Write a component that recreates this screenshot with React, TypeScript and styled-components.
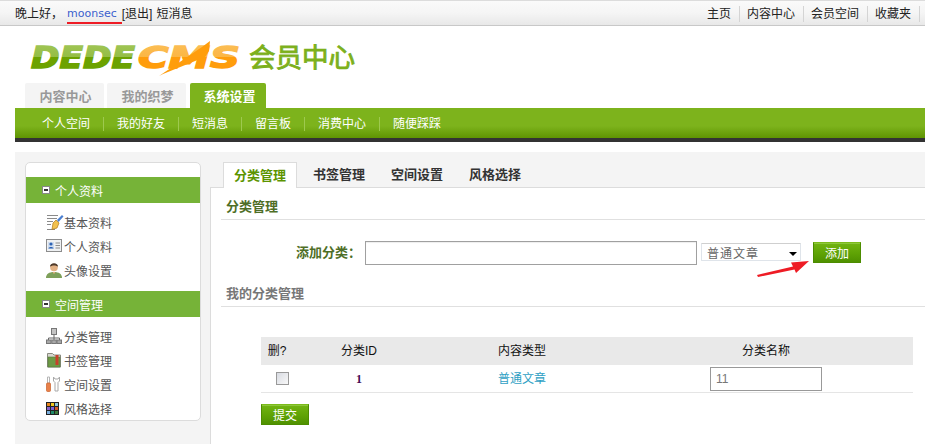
import styled, { createGlobalStyle } from 'styled-components';

const GlobalStyle = createGlobalStyle`
    html, body {
        margin: 0;
        padding: 0;
        background: #fff;
        font-family: "Liberation Sans", "Noto Sans CJK SC", sans-serif;
        font-size: 12px;
        color: #333;
    }
    * { box-sizing: border-box; }
`;

const PenIcon = () => (
    <svg width="18" height="16" viewBox="0 0 18 16">
        <path d="M1 1.500h11M1 4.500h10M1 7.500h6M1 10.500h4M1 15.500h8" stroke="#8a8a8a" fill="none" />
        <path d="M7 9l3-3 3 3-2 5-5 1.500z" fill="#f2c14e" stroke="#b07a1a" strokeWidth=".7" />
        <path d="M11 6l5-5 1.500 1.500-5 5.500z" fill="#4a7fd0" />
    </svg>
);

const CardIcon = () => (
    <svg width="16" height="14" viewBox="0 0 16 14">
        <rect x=".5" y=".5" width="15" height="12" fill="#eef0f2" stroke="#8c8c8c" />
        <rect x="2" y="3" width="6" height="7" fill="#cfdcee" />
        <circle cx="5" cy="5" r="1.600" fill="#2c62b4" />
        <path d="M2.500 9.500c0-2 5-2 5 0z" fill="#2c62b4" />
        <path d="M9.500 4h4.500M9.500 6.500h4.500M9.500 9h4.500" stroke="#8c8c8c" />
    </svg>
);

const UserIcon = () => (
    <svg width="16" height="16" viewBox="0 0 16 16">
        <path d="M0 16c0-4 3-6 8-6s8 2 8 6z" fill="#7ea05a" />
        <circle cx="8" cy="5.500" r="3.800" fill="#e2b184" />
        <path d="M4 5c-.5-5 8.500-5 8 0-1-2-7-2-8 0z" fill="#4e3a2a" />
        <path d="M6.500 10l1.500 2 1.500-2z" fill="#e2b184" />
    </svg>
);

const TreeIcon = () => (
    <svg width="16" height="16" viewBox="0 0 16 16">
        <rect x="5.500" y=".5" width="5" height="6" fill="#c4c4c4" stroke="#777" />
        <path d="M8 7v3M2.500 12v-2h11v2M8 10v2" stroke="#666" fill="none" />
        <rect x=".5" y="12" width="4.500" height="3.500" fill="#a8a8a8" stroke="#777" />
        <rect x="5.800" y="12" width="4.500" height="3.500" fill="#a8a8a8" stroke="#777" />
        <rect x="11" y="12" width="4.500" height="3.500" fill="#a8a8a8" stroke="#777" />
    </svg>
);

const FolderIcon = () => (
    <svg width="16" height="16" viewBox="0 0 16 16">
        <path d="M1.500 3V1.500h5L8 3h6.500v12h-13z" fill="#d8d8d0" stroke="#8a8a80" />
        <rect x="2" y="5" width="12" height="10" fill="#6d9a45" stroke="#55783a" strokeWidth=".6" />
        <rect x="9.500" y="3" width="3" height="10" fill="#c8402c" />
    </svg>
);

const ToolsIcon = () => (
    <svg width="16" height="16" viewBox="0 0 16 16">
        <path d="M1.500 1h2v6h-2z" fill="#fff" stroke="#b5b5b5" />
        <rect x="0.500" y="7" width="4" height="8.500" rx="1" fill="#e8804a" stroke="#c9612c" strokeWidth=".7" />
        <path d="M7.500 1v4L9 6.500v8.500h3V6.500L13.500 5V1L12 3H9z" fill="#fff" stroke="#a9a9a9" />
    </svg>
);

const GridIcon = () => {
    const colors = ['#e8861c', '#f2c81e', '#8cc6d8', '#8a62c8', '#7a62d8', '#d65a2a', '#7aaede', '#1e8a6a', '#3c7a3a'];
    return (
        <svg width="13" height="13" viewBox="0 0 13 13">
            <rect width="13" height="13" fill="#222" />
            {colors.map((color, index) => (
                <rect key={index} x={(index % 3) * 4 + 1} y={Math.floor(index / 3) * 4 + 1} width="3" height="3" fill={color} />
            ))}
        </svg>
    );
};

const Logo = () => (
    <svg width="335" height="48" viewBox="0 -6 335 48">
        <defs>
            <linearGradient id="dedeFill" x1="0" y1="0" x2="0" y2="1">
                <stop offset="0" stopColor="#a5c85a" />
                <stop offset="0.5" stopColor="#94bd46" />
                <stop offset="0.51" stopColor="#6ca200" />
                <stop offset="1" stopColor="#6ca200" />
            </linearGradient>
            <linearGradient id="cmsFill" x1="0" y1="0" x2="0" y2="1">
                <stop offset="0" stopColor="#fcc15c" />
                <stop offset="0.5" stopColor="#fbb644" />
                <stop offset="0.51" stopColor="#ff9d0c" />
                <stop offset="1" stopColor="#ff9d0c" />
            </linearGradient>
        </defs>
        <text x="1" y="29" fontFamily="'DejaVu Sans'" fontWeight="700" fontStyle="italic" fontSize="31" textLength="104" lengthAdjust="spacingAndGlyphs" fill="url(#dedeFill)" stroke="url(#dedeFill)" strokeWidth="1.500">DEDE</text>
        <text x="108" y="29" fontFamily="'DejaVu Sans'" fontWeight="700" fontStyle="italic" fontSize="31" textLength="102" lengthAdjust="spacingAndGlyphs" fill="url(#cmsFill)" stroke="url(#cmsFill)" strokeWidth="1.500">CMS</text>
        <path d="M129 37L172 8l8-6-1 10-4 6-42 17z" fill="#ff9d0c" />
        <text x="219" y="28" fontFamily="'Noto Sans CJK SC'" fontSize="26.500" fill="#7cb01c" textLength="106" stroke="#7cb01c" strokeWidth=".9">会员中心</text>
    </svg>
);

const spaceItems = [
    { icon: <PenIcon />, label: '基本资料' },
    { icon: <CardIcon />, label: '个人资料' },
    { icon: <UserIcon />, label: '头像设置' },
];

const manageItems = [
    { icon: <TreeIcon />, label: '分类管理' },
    { icon: <FolderIcon />, label: '书签管理' },
    { icon: <ToolsIcon />, label: '空间设置' },
    { icon: <GridIcon />, label: '风格选择' },
];

const App = () => {
    return (
        <Page>
            <GlobalStyle />
            <TopBar>
                <Greeting>
                    <span>晚上好，</span>
                    <UserName>moonsec</UserName>
                    <span>[退出]</span>
                    <span>短消息</span>
                </Greeting>
                <TopLinks>
                    {['主页', '内容中心', '会员空间', '收藏夹'].map((link) => (
                        <TopLink key={link}>{link}</TopLink>
                    ))}
                </TopLinks>
            </TopBar>

            <LogoRow>
                <Logo />
            </LogoRow>

            <ChannelTabs>
                <ChannelTab>内容中心</ChannelTab>
                <ChannelTab>我的织梦</ChannelTab>
                <ChannelTab $active>系统设置</ChannelTab>
            </ChannelTabs>

            <NavBar>
                {['个人空间', '我的好友', '短消息', '留言板', '消费中心', '随便踩踩'].map((item, index, all) => (
                    <NavItem key={item} $last={index === all.length - 1}>{item}</NavItem>
                ))}
            </NavBar>

            <Panel>
                <Sidebar>
                    <SideCard>
                        <SideHead><MinusBox />个人资料</SideHead>
                        <SideList>
                            {spaceItems.map((item) => (
                                <SideItem key={item.label}>
                                    <IconSlot>{item.icon}</IconSlot>{item.label}
                                </SideItem>
                            ))}
                        </SideList>
                        <SideHead><MinusBox />空间管理</SideHead>
                        <SideList>
                            {manageItems.map((item) => (
                                <SideItem key={item.label}>
                                    <IconSlot>{item.icon}</IconSlot>{item.label}
                                </SideItem>
                            ))}
                        </SideList>
                    </SideCard>
                </Sidebar>

                <Main>
                    <TabRow>
                        <Tab $active>分类管理</Tab>
                        <Tab>书签管理</Tab>
                        <Tab>空间设置</Tab>
                        <Tab>风格选择</Tab>
                    </TabRow>
                    <Content>
                        <SectionTitle>分类管理</SectionTitle>
                        <AddForm>
                            <AddLabel>添加分类：</AddLabel>
                            <NameInput />
                            <SelectWrap>
                                <TypeSelect defaultValue="普通文章">
                                    <option>普通文章</option>
                                </TypeSelect>
                            </SelectWrap>
                            <AddButton>添加</AddButton>
                            <Arrow width="56" height="20" viewBox="0 0 56 20">
                                <path d="M2 17L38 8.500l-2-4L54 3 41 15l-1.500-3.500L3 19z" fill="#ee1c25" />
                            </Arrow>
                        </AddForm>
                        <SectionTitle $muted>我的分类管理</SectionTitle>
                        <Table>
                            <HeadRow>
                                <Cell>删?</Cell>
                                <Cell>分类ID</Cell>
                                <Cell>内容类型</Cell>
                                <Cell>分类名称</Cell>
                            </HeadRow>
                            <BodyRow>
                                <Cell><CheckBox type="checkbox" /></Cell>
                                <IdCell>1</IdCell>
                                <LinkCell>普通文章</LinkCell>
                                <Cell><CategoryInput defaultValue="11" /></Cell>
                            </BodyRow>
                        </Table>
                        <SubmitRow>
                            <GreenButton>提交</GreenButton>
                        </SubmitRow>
                    </Content>
                </Main>
            </Panel>
        </Page>
    );
};

export default App;

const Page = styled.div`
    width: 925px;
    height: 444px;
    overflow: hidden;
`;

const TopBar = styled.div`
    height: 26px;
    display: flex;
    justify-content: space-between;
    align-items: center;
    padding: 1px 5px 0 15px;
    background: linear-gradient(180deg, #fafafa 0%, #f5f5f5 50%, #e8e8e8 100%);
    border-top: 1px solid #dcdcdc;
    border-bottom: 1px solid #c8c8c8;
    color: #222;
`;

const Greeting = styled.div`
    display: flex;
    gap: 4px;
`;

const UserName = styled.span`
    padding-right: 5px;
    margin-right: -4px;
    color: #3a5fcd;
    font-family: "DejaVu Sans", sans-serif;
    font-size: 11px;
    line-height: 17px;
    border-bottom: 2px solid #ee1c25;
    position: relative;
    top: 1px;
`;

const TopLinks = styled.div`
    display: flex;
`;

const TopLink = styled.span`
    padding: 0 8px 0 7px;
    border-right: 1px solid #d4d4d4;
    line-height: 16px;
`;

const LogoRow = styled.div`
    height: 57px;
    padding: 7px 0 0 30px;

    svg {
        display: block;
    }
`;

const ChannelTabs = styled.div`
    display: flex;
    gap: 3px;
    padding-left: 25px;
    height: 25px;
`;

const ChannelTab = styled.div<{ $active?: boolean }>`
    width: ${(p) => (p.$active ? '76px' : '79px')};
    margin-left: ${(p) => (p.$active ? '1px' : '0')};
    padding-left: ${(p) => (p.$active ? '3px' : '2px')};
    border-radius: 2px 2px 0 0;
    text-align: center;
    line-height: 27px;
    font-size: 13px;
    font-weight: 700;
    background: ${(p) => (p.$active ? '#7db31c' : '#f4f4f4')};
    color: ${(p) => (p.$active ? '#fff' : '#999')};
`;

const NavBar = styled.div`
    margin-left: 15px;
    height: 34px;
    padding: 2px 0 0 27px;
    display: flex;
    align-items: center;
    background: linear-gradient(180deg, #7db31c 0%, #7db31c 60%, #5f9402 100%);
    border-bottom: 4px solid #333;
    color: #fff;
`;

const NavItem = styled.div<{ $last?: boolean }>`
    padding-right: 13px;
    margin-right: 13px;
    line-height: 14px;
    border-right: ${(p) => (p.$last ? 'none' : '1px solid #9ec94f')};
`;

const Panel = styled.div`
    margin: 10px 0 0 15px;
    display: flex;
    height: 292px;
    background: #f4f4f4;
`;

const Sidebar = styled.aside`
    width: 195px;
    flex: none;
    padding: 10px 9px 0 10px;
`;

const SideCard = styled.div`
    height: 259px;
    padding-top: 14px;
    background: #fff;
    border: 1px solid #dcdcdc;
    border-radius: 5px;
    overflow: hidden;
`;

const SideHead = styled.div`
    height: 26px;
    display: flex;
    align-items: center;
    gap: 5px;
    padding-left: 16px;
    background: #76b338;
    color: #fff;
`;

const MinusBox = styled.span`
    width: 8px;
    height: 8px;
    flex: none;
    border: 1px solid #888;
    background: #fff;
    position: relative;

    &::after {
        content: '';
        position: absolute;
        left: 1px;
        top: 2px;
        width: 4px;
        height: 2px;
        background: #333;
    }
`;

const SideList = styled.div`
    padding: 7px 0 9px;
`;

const SideItem = styled.div`
    height: 24px;
    display: flex;
    align-items: center;
    padding-left: 20px;
    color: #555;
`;

const IconSlot = styled.span`
    width: 18px;
    height: 16px;
    flex: none;
    display: flex;
    align-items: center;
    justify-content: flex-start;
`;

const Main = styled.main`
    flex: 1;
    min-width: 0;
    display: flex;
    flex-direction: column;
`;

const TabRow = styled.div`
    height: 36px;
    flex: none;
    display: flex;
    align-items: flex-end;
    padding-left: 13px;
    border-bottom: 1px solid #dcdcdc;
`;

const Tab = styled.div<{ $active?: boolean }>`
    height: 26px;
    width: ${(p) => (p.$active ? '74px' : '78px')};
    margin-bottom: -1px;
    margin-right: ${(p) => (p.$active ? '5px' : '0')};
    padding-left: ${(p) => (p.$active ? '10px' : '11px')};
    font-size: 13px;
    font-weight: 700;
    line-height: 25px;
    color: ${(p) => (p.$active ? '#5c9400' : '#333')};
    background: ${(p) => (p.$active ? '#fff' : 'transparent')};
    border: ${(p) => (p.$active ? '1px solid #dcdcdc' : 'none')};
    border-bottom: none;
`;

const Content = styled.div`
    flex: 1;
    background: #fff;
    border-left: 1px solid #dcdcdc;
    padding-left: 10px;
`;

const SectionTitle = styled.div<{ $muted?: boolean }>`
    height: ${(p) => (p.$muted ? '31px' : '32px')};
    padding: ${(p) => (p.$muted ? '8px' : '9px')} 0 0 5px;
    font-size: 13px;
    line-height: 20px;
    font-weight: 700;
    color: ${(p) => (p.$muted ? '#777' : '#4e6e26')};
    border-bottom: 1px solid #e0e0e0;
`;

const AddForm = styled.div`
    height: 56px;
    display: flex;
    align-items: flex-start;
    padding: 21px 0 0 75px;
    position: relative;
`;

const AddLabel = styled.label`
    width: 69px;
    flex: none;
    font-size: 13px;
    font-weight: 700;
    line-height: 24px;
    color: #4e6e26;
`;

const NameInput = styled.input`
    width: 332px;
    height: 24px;
    flex: none;
    border: 1px solid #a0a0a0;
    background: #fff;
    box-shadow: inset 0 1px 1px #eee;
    outline: none;
`;

const SelectWrap = styled.div`
    margin: 2px 0 0 4px;
    position: relative;
    flex: none;

    &::after {
        content: '';
        position: absolute;
        right: 4px;
        top: 9px;
        border: 4px solid transparent;
        border-top: 4px solid #000;
        border-bottom: none;
    }
`;

const TypeSelect = styled.select`
    display: block;
    appearance: none;
    width: 100px;
    height: 18px;
    padding: 0 0 0 5px;
    border: 1px solid #dfe4ea;
    border-top-color: #cfcfcf;
    border-radius: 1px;
    background: #fff;
    color: #666;
    font: 12px "Noto Sans CJK SC", sans-serif;
    letter-spacing: 1px;
    outline: none;
`;

const GreenButton = styled.button`
    width: 48px;
    height: 21px;
    flex: none;
    margin: 0;
    padding: 0;
    border: 1px solid #4c8c00;
    border-top-color: #7cbb1a;
    background: linear-gradient(180deg, #72b412 0%, #5fa305 55%, #4f9100 100%);
    box-shadow: inset 0 1px 0 #8cc63a;
    color: #fff;
    font: 12px "Noto Sans CJK SC", sans-serif;
    line-height: 18px;
`;

const AddButton = styled(GreenButton)`
    margin: 1px 0 0 12px;
`;

const Arrow = styled.svg`
    position: absolute;
    left: 534px;
    top: 38px;
`;

const Table = styled.div`
    margin: 30px 0 0 40px;
    width: 652px;
`;

const HeadRow = styled.div`
    display: grid;
    grid-template-columns: 32px 132px 194px 294px;
    height: 28px;
    align-items: center;
    background: #e9e9e9;
    color: #111;
    text-align: center;
`;

const BodyRow = styled(HeadRow)`
    background: #fff;
    border-bottom: 1px solid #e5e5e5;
`;

const Cell = styled.div`
    line-height: 16px;
`;

const IdCell = styled(Cell)`
    color: #440a55;
    font-family: "Liberation Serif", serif;
    font-weight: 700;
`;

const LinkCell = styled(Cell)`
    color: #2f9fc4;
`;

const CheckBox = styled.input`
    appearance: none;
    display: block;
    width: 13px;
    height: 13px;
    margin: 0 0 0 15px;
    border: 1px solid #999;
    background: linear-gradient(135deg, #d8dbe2, #f8f8f8);
`;

const CategoryInput = styled.input`
    display: block;
    width: 112px;
    height: 24px;
    margin: 0 0 0 91px;
    padding: 1px 5px;
    border: 1px solid #999;
    color: #777;
    font: 12px "Liberation Sans", sans-serif;
    outline: none;
`;

const SubmitRow = styled.div`
    margin: 11px 0 0 40px;
`;
